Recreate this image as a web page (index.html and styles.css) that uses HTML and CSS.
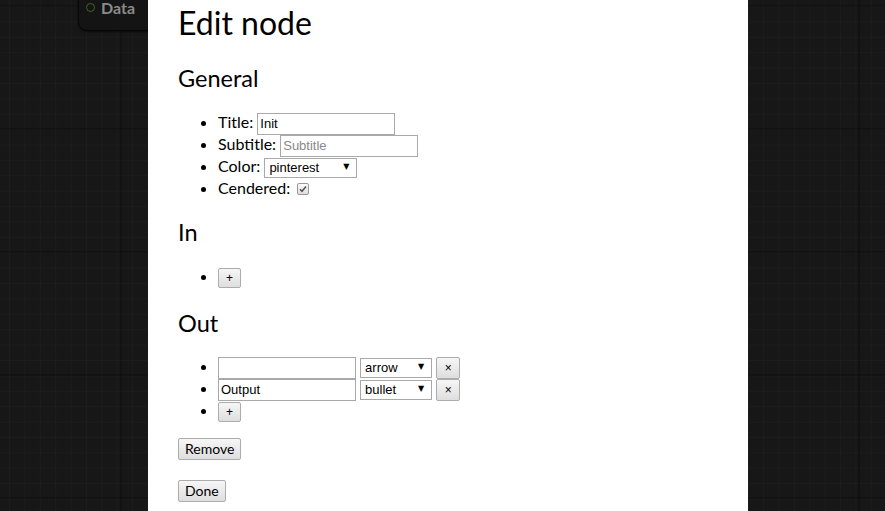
FILE: index.html
```html
<!DOCTYPE html>
<html>
<head>
<meta charset="utf-8">
<link rel="stylesheet" href="styles.css">
</head>
<body>
<div class="canvas">
  <div class="node">
    <span class="port"></span><span class="node-title">Data</span>
  </div>
</div>
<div class="modal">
  <h1>Edit node</h1>
  <h2>General</h2>
  <ul>
    <li>Title: <input class="txt" type="text" value="Init"></li>
    <li>Subtitle: <input class="txt" type="text" placeholder="Subtitle"></li>
    <li>Color: <span class="sel w93"><select><option>pinterest</option></select></span></li>
    <li class="short">Cendered: <span class="chk"><svg width="8" height="8" viewBox="0 0 8 8"><path d="M1 4.2 L3 6.3 L7 1.5" fill="none" stroke="#555" stroke-width="1.6"/></svg></span></li>
  </ul>
  <h2>In</h2>
  <ul>
    <li><button class="sm">+</button></li>
  </ul>
  <h2 class="out">Out</h2>
  <ul class="out-list">
    <li class="row"><input class="txt" type="text" value=""> <span class="sel w72"><select><option>arrow</option></select></span> <button class="x">×</button></li>
    <li class="row"><input class="txt" type="text" value="Output"> <span class="sel w72"><select><option>bullet</option></select></span> <button class="x">×</button></li>
    <li class="row"><button class="sm">+</button></li>
  </ul>
  <p class="act"><button class="big">Remove</button></p>
  <p class="act"><button class="big">Done</button></p>
</div>
</body>
</html>
```
FILE: styles.css
```css
html, body {
  margin: 0;
  height: 100%;
  overflow: hidden;
}
body {
  background-color: #171717;
  background-image:
    linear-gradient(to right, rgba(0,0,0,0.22) 2px, transparent 2px),
    linear-gradient(to bottom, rgba(0,0,0,0.22) 2px, transparent 2px),
    linear-gradient(to right, #1c1c1c 1px, transparent 1px),
    linear-gradient(to bottom, #1c1c1c 1px, transparent 1px);
  background-size: 123px 123px, 123px 123px, 15.4px 15.4px, 15.4px 15.4px;
  background-position: -3px 5px, -3px 5px, 9px 6px, 9px 6px;
  font-family: Lato, "Liberation Sans", sans-serif;
}
.canvas {
  position: relative;
  height: 100%;
}
.node {
  position: absolute;
  left: 78px;
  top: -20px;
  width: 80px;
  height: 49px;
  background: #141414;
  border: 1px solid #070707;
  border-radius: 9px;
  box-shadow: 0 1px 2px rgba(0,0,0,0.5);
}
.port {
  position: absolute;
  left: 7px;
  top: 22px;
  width: 7px;
  height: 7px;
  border: 1.5px solid #45631f;
  border-radius: 50%;
}
.node-title {
  position: absolute;
  left: 22px;
  top: 19px;
  line-height: 16px;
  color: #8a8a8a;
  font-weight: bold;
  font-size: 16px;
}
.modal {
  position: absolute;
  left: 148px;
  top: 0;
  width: 540px;
  height: 100%;
  background: #fff;
  padding: 0 30px;
  color: #000;
}
h1 {
  font-size: 32px;
  font-weight: normal;
  margin: 3px 0 0;
  line-height: 40px;
}
h2 {
  font-size: 23.5px;
  font-weight: normal;
  margin: 20px 0 0;
  line-height: 30px;
}
h2.out { margin-top: 21px; }
ul {
  margin: 18px 0 0;
  padding-left: 40px;
  font-size: 16px;
}
ul.out-list { margin-top: 17px; }
li {
  line-height: 22px;
  height: 22px;
}
li.short { height: 20px; }
.txt {
  box-sizing: border-box;
  width: 138px;
  height: 22px;
  border: 1px solid #a9a9a9;
  padding: 1px 2px;
  margin: 0;
  font-family: "Liberation Sans", Arial, sans-serif;
  font-size: 13px;
  color: #000;
  vertical-align: middle;
  outline: none;
}
.txt::placeholder { color: #888; }
.sel {
  display: inline-block;
  position: relative;
  vertical-align: middle;
  height: 20px;
}
.sel select {
  -webkit-appearance: none;
  appearance: none;
  box-sizing: border-box;
  height: 20px;
  border: 1px solid #a9a9a9;
  border-radius: 0;
  background: #fff;
  font-family: "Liberation Sans", Arial, sans-serif;
  font-size: 13px;
  padding: 0 0 0 4px;
  margin: 0;
  color: #000;
  vertical-align: top;
}
.w93 select { width: 93px; }
.w72 select { width: 72px; }
.sel::after {
  content: "▼";
  position: absolute;
  right: 8px;
  top: 3px;
  font-size: 8px;
  line-height: 12px;
  color: #000;
  pointer-events: none;
  font-family: "DejaVu Sans", sans-serif;
}
.chk {
  display: inline-block;
  box-sizing: border-box;
  width: 12px;
  height: 12px;
  border: 1px solid #999;
  border-radius: 2px;
  background: linear-gradient(#fbfbfb, #dedede);
  vertical-align: -1px;
  margin-left: 3px;
  position: relative;
}
.chk svg { position: absolute; left: 1px; top: 1px; }
button {
  font-family: "Liberation Sans", Arial, sans-serif;
  font-size: 13px;
  background: linear-gradient(#f6f6f6, #dedede);
  border: 1px solid #acacac;
  border-radius: 2px;
  color: #000;
  margin: 0;
  padding: 0;
  vertical-align: middle;
}
.sm {
  width: 23px;
  height: 20px;
  font-size: 12px;
}
.x {
  width: 24px;
  height: 22px;
  font-size: 12px;
  margin-left: 0;
}
.big {
  font-family: Lato, sans-serif;
  font-size: 14px;
  height: 22px;
  padding: 0 6px;
}
.act { margin: 16px 0 0; }
.act + .act { margin-top: 19px; }
```
